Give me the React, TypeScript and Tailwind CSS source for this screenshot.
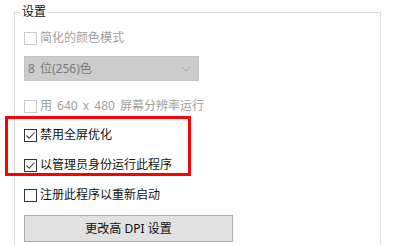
import React from "react";

const font = {
  fontFamily: '"Noto Sans", "Noto Sans CJK SC", "Liberation Sans", sans-serif',
};

const CheckBox = ({ checked, disabled }: { checked?: boolean; disabled?: boolean }) => (
  <span
    className={`flex h-[13px] w-[13px] shrink-0 items-center justify-center border bg-white ${
      disabled ? "border-[#cccccc]" : "border-[#333333]"
    }`}
  >
    {checked && (
      <svg width="11" height="11" viewBox="0 0 11 11" fill="none">
        <path d="M1.5 5.5 L4.2 8.2 L9.5 2.5" stroke="#444444" strokeWidth="1.1" />
      </svg>
    )}
  </span>
);

const Row = ({
  label,
  checked,
  disabled,
  className,
}: {
  label: string;
  checked?: boolean;
  disabled?: boolean;
  className: string;
}) => (
  <div className={`flex h-[16px] items-center gap-[3px] ${className}`}>
    <CheckBox checked={checked} disabled={disabled} />
    <span className={`text-[12px] leading-[16px] ${disabled ? "text-[#a0a0a0]" : "text-[#111111]"}`}>
      {label}
    </span>
  </div>
);

export default function App() {
  return (
    <div
      className="relative h-[245px] w-[397px] overflow-hidden bg-white [word-spacing:2px]"
      style={font}
    >
      <div className="pt-[12px] pl-[14px]">
        <div className="relative h-[260px] w-[367px] border border-[#dcdcdc] pl-[9px]">
          <span className="absolute top-[-9px] left-[6px] bg-white px-[1px] text-[12px] leading-[16px] text-[#111111]">
            设置
          </span>

          <Row className="mt-[17px]" label="简化的颜色模式" disabled />

          <div className="mt-[10px] flex h-[25px] w-[175px] items-center justify-between border border-[#c4c4c4] bg-[#cccccc] pr-[7px] pl-[3px]">
            <span className="text-[12px] leading-[16px] text-[#7a7a7a]">8 位(256)色</span>
            <svg width="10" height="6" viewBox="0 0 10 6" fill="none">
              <path d="M1 1 L5 5 L9 1" stroke="#a8a8a8" strokeWidth="1" />
            </svg>
          </div>

          <Row className="mt-[17px]" label="用 640 x 480 屏幕分辨率运行" disabled />
          <Row className="mt-[13px]" label="禁用全屏优化" checked />
          <Row className="mt-[14px]" label="以管理员身份运行此程序" checked />
          <Row className="mt-[14px]" label="注册此程序以重新启动" />

          <button className="mt-[12px] flex h-[27px] w-[209px] items-center justify-center border border-[#adadad] bg-[#e1e1e1] text-[12px] leading-[16px] text-[#111111]">
            更改高 DPI 设置
          </button>
        </div>
      </div>

      <div className="pointer-events-none absolute top-[116px] left-[5px] h-[60px] w-[186px] border-[3px] border-[#ff0000]" />
    </div>
  );
}
